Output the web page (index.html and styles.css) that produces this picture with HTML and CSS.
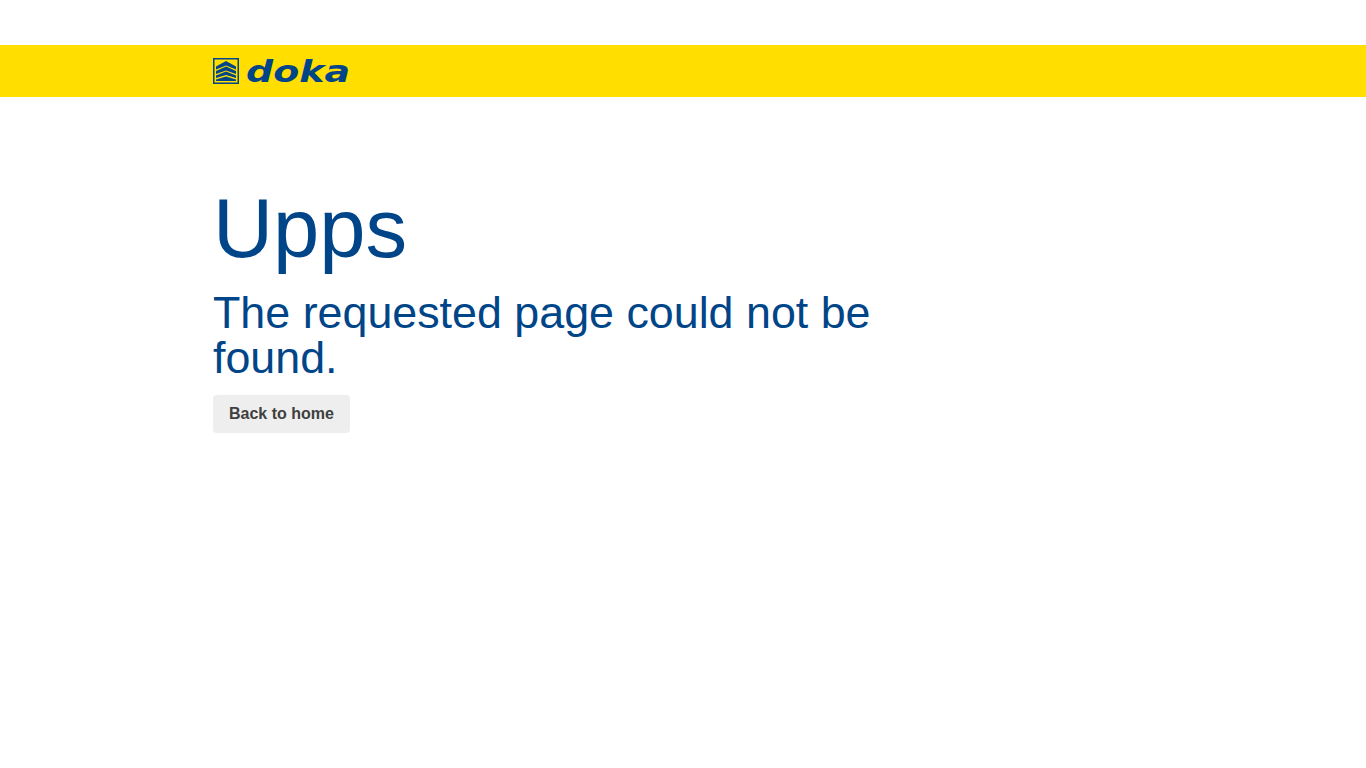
FILE: index.html
```html
<!DOCTYPE html>
<html lang="en">
<head>
  <meta charset="UTF-8">
  <meta name="viewport" content="width=device-width, initial-scale=1.0">
  <title>Upps</title>
  <link rel="stylesheet" href="styles.css">
</head>
<body>
  <header class="top-bar">
    <div class="container">
      <a class="logo" href="#" aria-label="doka">
        <svg class="logo-mark" width="26" height="26" viewBox="0 0 26 26">
          <rect x="0.75" y="0.75" width="24.5" height="24.5" fill="none" stroke="#004588" stroke-width="1.5"/>
          <path d="M3 8.5 13 3 23 8.5V11.5L13 7.5 3 11.5Z" fill="#004588"/>
          <path d="M3 13 13 8.5 23 13V16L13 12.5 3 16Z" fill="#004588"/>
          <path d="M3 17.5 13 13.5 23 17.5V20L13 17 3 20Z" fill="#004588"/>
          <path d="M3 21.5 13 18.5 23 21.5V23H3Z" fill="#004588"/>
        </svg>
        <svg class="logo-word" width="106" height="26" viewBox="0 0 106 26">
          <text x="0" y="24" textLength="104" lengthAdjust="spacingAndGlyphs">doka</text>
        </svg>
      </a>
    </div>
  </header>
  <main class="container error-page">
    <h1>Upps</h1>
    <h2>The requested page could not be found.</h2>
    <a class="btn" href="#">Back to home</a>
  </main>
</body>
</html>
```

FILE: styles.css
```css
body {
  margin: 0;
  background: #fff;
  font-family: "Liberation Sans", Arial, sans-serif;
}
.container {
  width: 940px;
  margin: 0 auto;
}
.top-bar {
  margin-top: 45px;
  height: 52px;
  background: #ffde00;
}
.top-bar .container {
  height: 100%;
  display: flex;
  align-items: center;
}
.logo {
  display: flex;
  align-items: center;
  gap: 7px;
}
.logo-mark, .logo-word {
  display: block;
}
.logo-word {
  overflow: visible;
}
.logo-word text {
  font-family: "DejaVu Sans", sans-serif;
  font-weight: bold;
  font-style: italic;
  font-size: 31px;
  fill: #004588;
}
.error-page {
  padding-top: 85px;
}
h1 {
  margin: 0 0 14px;
  font-size: 83.2px;
  font-weight: normal;
  line-height: 94px;
  color: #004588;
}
h2 {
  margin: 0 0 15px;
  width: 700px;
  font-size: 44.8px;
  font-weight: normal;
  line-height: 45px;
  color: #004588;
}
.btn {
  display: inline-block;
  padding: 0 16px;
  height: 38px;
  line-height: 38px;
  font-size: 16px;
  font-weight: bold;
  color: #404040;
  background: #eee;
  border-radius: 4px;
  text-decoration: none;
}
```
